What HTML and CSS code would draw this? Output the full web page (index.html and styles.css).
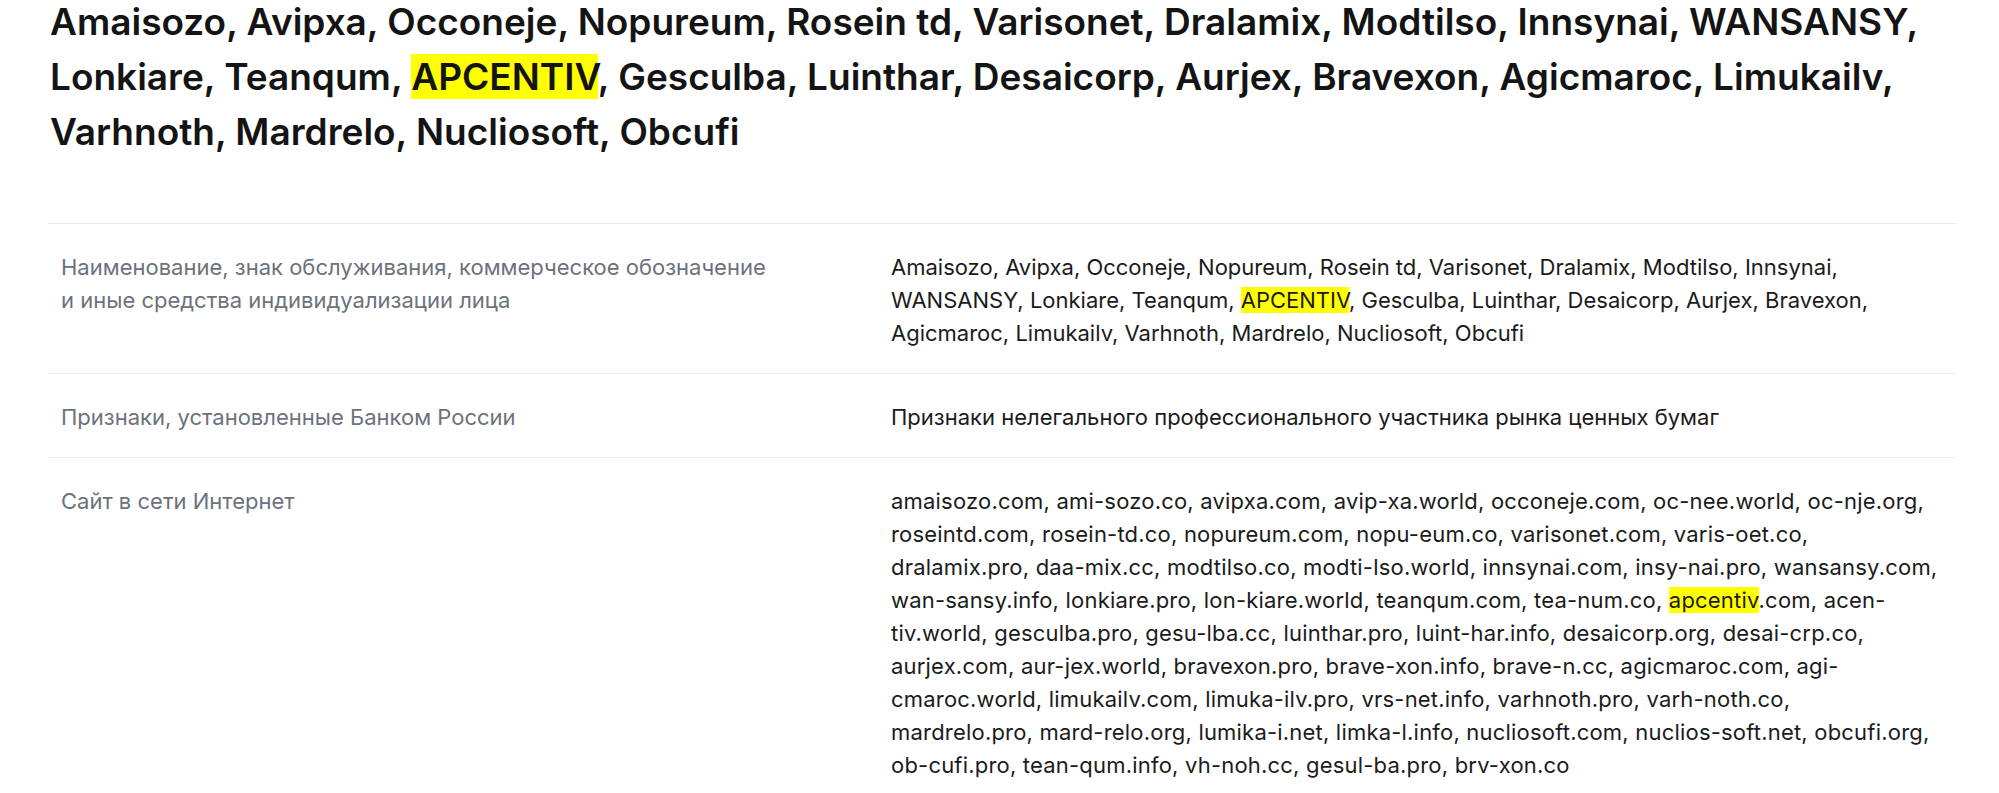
FILE: index.html
```html
<!doctype html>
<html lang="ru">
    <head>
        <title>Amaisozo, Avipxa, Occoneje</title>
        <meta charset="utf-8">
        <meta name="viewport" content="width=device-width, initial-scale=1.0">
        <link rel="stylesheet" href="styles.css">
    </head>
    <body>
        <div class="page">
            <h1 class="title">Amaisozo, Avipxa, Occoneje, Nopureum, Rosein td, Varisonet, Dralamix, Modtilso, Innsynai, WANSANSY, Lonkiare, Teanqum, <mark>APCENTIV</mark>, Gesculba, Luinthar, Desaicorp, Aurjex, Bravexon, Agicmaroc, Limukailv, Varhnoth, Mardrelo, Nucliosoft, Obcufi</h1>

            <!-- details -->
            <div class="details">
                <div class="row">
                    <div class="label">Наименование, знак обслуживания, коммерческое обозначение<br>и иные средства индивидуализации лица</div>
                    <div class="value">Amaisozo, Avipxa, Occoneje, Nopureum, Rosein td, Varisonet, Dralamix, Modtilso, Innsynai, WANSANSY, Lonkiare, Teanqum, <mark>APCENTIV</mark>, Gesculba, Luinthar, Desaicorp, Aurjex, Bravexon, Agicmaroc, Limukailv, Varhnoth, Mardrelo, Nucliosoft, Obcufi</div>
                </div>
                <div class="row">
                    <div class="label">Признаки, установленные Банком России</div>
                    <div class="value">Признаки нелегального профессионального участника рынка ценных бумаг</div>
                </div>
                <div class="row">
                    <div class="label">Сайт в сети Интернет</div>
                    <div class="value sites">amaisozo.com, ami-sozo.co, avipxa.com, avip-xa.world, occoneje.com, oc-nee.world, oc-nje.org,<br>
                        roseintd.com, rosein-td.co, nopureum.com, nopu-eum.co, varisonet.com, varis-oet.co,<br>
                        dralamix.pro, daa-mix.cc, modtilso.co, modti-lso.world, innsynai.com, insy-nai.pro, wansansy.com,<br>
                        wan-sansy.info, lonkiare.pro, lon-kiare.world, teanqum.com, tea-num.co, <mark>apcentiv</mark>.com, acen-<br>tiv.world, gesculba.pro, gesu-lba.cc, luinthar.pro, luint-har.info, desaicorp.org, desai-crp.co,<br>
                        aurjex.com, aur-jex.world, bravexon.pro, brave-xon.info, brave-n.cc, agicmaroc.com, agi-<br>cmaroc.world, limukailv.com, limuka-ilv.pro, vrs-net.info, varhnoth.pro, varh-noth.co,<br>
                        mardrelo.pro, mard-relo.org, lumika-i.net, limka-l.info, nucliosoft.com, nuclios-soft.net, obcufi.org,<br>
                        ob-cufi.pro, tean-qum.info, vh-noh.cc, gesul-ba.pro, brv-xon.co</div>
                </div>
            </div>
        </div>
    </body>
</html>
```

FILE: styles.css
```css
body
{
    margin: 0;
    background-color: #fff;
    color: #1b1b1b;
    font-family: Inter, "Noto Sans", sans-serif;
    overflow: hidden;
}
.page
{
    padding: 0 43px 0 48px;
}
.title
{
    margin: -6px 0 0 2px;
    font-size: 37px;
    line-height: 55px;
    font-weight: 600;
    color: #141414;
}
mark
{
    background-color: #ffff00;
    color: inherit;
}
.details
{
    margin-top: 64px;
    border-top: 1px solid #ededed;
}
.row
{
    display: grid;
    grid-template-columns: 830px 1fr;
    padding: 27px 13px 23px;
    border-bottom: 1px solid #ededed;
    font-size: 22px;
    line-height: 33px;
}
.label
{
    color: #6c727c;
}
.value
{
    color: #1b1b1b;
}
.sites
{
    letter-spacing: 0.2px;
    white-space: nowrap;
}
```
